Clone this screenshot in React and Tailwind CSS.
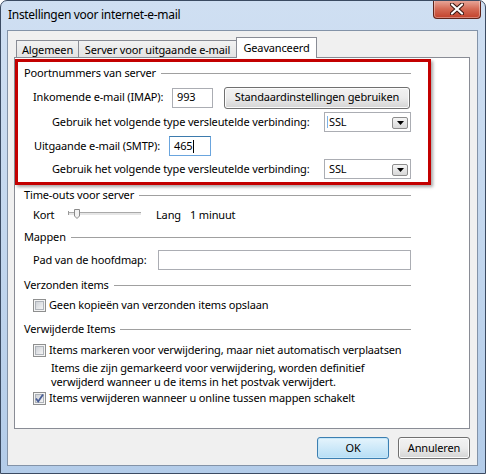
import React from 'react'

const Heading = ({ title, className = '' }) => (
  <div className={`flex items-center h-[16px] ${className}`}>
    <span className="whitespace-nowrap">{title}</span>
    <div className="flex-1 h-px bg-[#a0a0a0] ml-[5px]"></div>
  </div>
)

const Checkbox = ({ checked }) => (
  <svg width="13" height="13" viewBox="0 0 13 13" className="shrink-0">
    <defs>
      <linearGradient id={checked ? 'cbc' : 'cbu'} x1="0" y1="0" x2="1" y2="1">
        <stop offset="0" stopColor="#cbcfd5" />
        <stop offset="1" stopColor="#f7f7f7" />
      </linearGradient>
    </defs>
    <rect x="0.5" y="0.5" width="12" height="12" fill="#f4f4f4" stroke="#8e8f8f" />
    <rect x="2.5" y="2.5" width="8" height="8" fill={`url(#${checked ? 'cbc' : 'cbu'})`} stroke="#aeb3b9" />
    {checked && (
      <path d="M3 6.5 L5.2 9.5 L10 2.5" fill="none" stroke="#4a5f97" strokeWidth="1.8" />
    )}
  </svg>
)

const Select = ({ caret }) => (
  <div className="relative w-[87px] h-[20px] border border-[#abadb3] bg-white flex items-center pl-[4px] shrink-0">
    {caret && <div className="absolute left-[2px] top-[3px] w-px h-[12px] bg-[#7fb3e6]"></div>}
    <span>SSL</span>
    <div className="absolute right-[2px] top-[4px] w-[16px] h-[12px] border border-[#8d8d8d] rounded-[2px] bg-gradient-to-b from-[#f5f5f5] to-[#d8d8d8] flex items-center justify-center">
      <svg width="7" height="4" viewBox="0 0 7 4">
        <path d="M0 0 H7 L3.5 4 Z" fill="#000" />
      </svg>
    </div>
  </div>
)

const Slider = () => (
  <svg width="73" height="16" viewBox="0 0 73 16" className="shrink-0">
    <rect x="0" y="5" width="73" height="1" fill="#a9a9a9" />
    <rect x="0" y="6" width="73" height="2" fill="#e6e6e6" />
    <rect x="0" y="4" width="1" height="4" fill="#9a9a9a" />
    <path d="M6.5 2.5 H11.5 V9 L9 11.5 L6.5 9 Z" fill="#f2f2f2" stroke="#8a8a8a" />
  </svg>
)

const Button = ({ children, def, className = '' }) => (
  <div
    className={`h-[22px] rounded-[3px] border flex items-center justify-center whitespace-nowrap shrink-0 ${
      def
        ? 'border-[#3c7fb1] bg-gradient-to-b from-[#e5f4fc] to-[#b6def5] shadow-[inset_0_0_0_1px_#c6e7f9]'
        : 'border-[#707070] bg-gradient-to-b from-[#f2f2f2] via-[#ebebeb] to-[#d4d4d4] shadow-[inset_0_0_0_1px_#fcfcfc]'
    } ${className}`}
  >
    {children}
  </div>
)

const App = () => {
  return (
    <div className="w-[486px] h-[474px] flex flex-col rounded-t-[7px] border border-[#3b4b62] bg-gradient-to-b from-[#cfdff2] via-[#c3d7ee] to-[#b3cce9] font-['Noto_Sans',sans-serif] text-[11px] tracking-[-0.15px] text-black overflow-hidden whitespace-nowrap">
      {/* Title bar */}
      <div className="h-[29px] flex justify-between shrink-0">
        <div className="pl-[7px] pt-[6px] leading-[16px] text-[12px] tracking-[-0.3px]">Instellingen voor internet-e-mail</div>
        <div className="-mt-px mr-[4px] w-[48px] h-[19px] rounded-b-[4px] border border-[#5f241a] border-t-0 bg-gradient-to-b from-[#e8ab9f] via-[#d46a55] to-[#c2402a] flex items-center justify-center shadow-[inset_0_0_0_1px_rgba(255,255,255,0.35)]">
          <svg width="14" height="12" viewBox="0 0 14 12">
            <path d="M2 1.5 L12 10.5 M12 1.5 L2 10.5" stroke="#3a1712" strokeWidth="4.2" strokeLinecap="round" />
            <path d="M2 1.5 L12 10.5 M12 1.5 L2 10.5" stroke="#ffffff" strokeWidth="2.2" strokeLinecap="round" />
          </svg>
        </div>
      </div>

      {/* Client area */}
      <div className="flex-1 ml-[6px] mr-[7px] mb-[7px] border border-[#8393a8] bg-[#f0f0f0] flex flex-col">
        {/* Tabs */}
        <div className="pt-[6px] pl-[8px] flex items-end h-[26px] shrink-0">
          <div className="w-[63px] h-[17px] border border-b-0 border-[#898c95] bg-gradient-to-b from-[#f2f2f2] to-[#e3e3e3] flex items-center justify-center leading-none pt-[1px]">
            Algemeen
          </div>
          <div className="w-[158px] h-[17px] border border-l-0 border-b-0 border-[#898c95] bg-gradient-to-b from-[#f2f2f2] to-[#e3e3e3] flex items-center justify-center leading-none pt-[1px]">
            Server voor uitgaande e-mail
          </div>
          <div className="-ml-px w-[81px] h-[21px] -mb-px relative z-10 border border-b-0 border-[#898c95] bg-white flex items-center justify-center leading-none pb-[1px]">
            Geavanceerd
          </div>
        </div>

        {/* Tab panel */}
        <div className="flex-1 mx-[6px] mr-[7px] border border-[#898c95] bg-white relative">
          <div className="pl-[9px] pr-[58px] flex flex-col">
            <Heading title="Poortnummers van server" className="mt-[7px]" />

            <div className="mt-[6px] h-[21px] pl-[9px] flex items-center">
              <span className="w-[139px] shrink-0">Inkomende e-mail (IMAP):</span>
              <div className="w-[41px] h-[20px] border border-[#abadb3] flex items-center pl-[4px] shrink-0">993</div>
              <Button className="ml-[11px] w-[186px]">Standaardinstellingen gebruiken</Button>
            </div>

            <div className="mt-[4px] h-[20px] pl-[28px] flex items-center">
              <span className="w-[272px] shrink-0">Gebruik het volgende type versleutelde verbinding:</span>
              <Select caret />
            </div>

            <div className="mt-[4px] h-[20px] pl-[10px] flex items-center">
              <span className="w-[135px] shrink-0">Uitgaande e-mail (SMTP):</span>
              <div className="w-[42px] h-[20px] border border-[#6aa5de] border-t-[#3d7bad] flex items-center pl-[4px] shrink-0">
                465<span className="w-px h-[13px] bg-black ml-px"></span>
              </div>
            </div>

            <div className="mt-[3px] h-[20px] pl-[28px] flex items-center">
              <span className="w-[272px] shrink-0">Gebruik het volgende type versleutelde verbinding:</span>
              <Select />
            </div>

            <Heading title="Time-outs voor server" className="mt-[8px]" />

            <div className="mt-[4px] h-[16px] pl-[9px] flex items-center">
              <span className="w-[35px] shrink-0">Kort</span>
              <Slider />
              <span className="ml-[15px] w-[34px] shrink-0">Lang</span>
              <span>1 minuut</span>
            </div>

            <Heading title="Mappen" className="mt-[6px]" />

            <div className="mt-[5px] h-[20px] pl-[9px] flex items-center">
              <span className="w-[125px] shrink-0">Pad van de hoofdmap:</span>
              <div className="flex-1 h-[20px] border border-[#abadb3]"></div>
            </div>

            <Heading title="Verzonden items" className="mt-[7px]" />

            <div className="mt-[4px] h-[16px] pl-[9px] flex items-center gap-[3px]">
              <Checkbox />
              <span>Geen kopieën van verzonden items opslaan</span>
            </div>

            <Heading title="Verwijderde Items" className="mt-[8px]" />

            <div className="mt-[5px] h-[16px] pl-[9px] flex items-center gap-[3px]">
              <Checkbox />
              <span>Items markeren voor verwijdering, maar niet automatisch verplaatsen</span>
            </div>

            <div className="mt-[3px] pl-[27px] leading-[14px]">
              <div>Items die zijn gemarkeerd voor verwijdering, worden definitief</div>
              <div>verwijderd wanneer u de items in het postvak verwijdert.</div>
            </div>

            <div className="mt-[1px] h-[16px] pl-[9px] flex items-center gap-[3px]">
              <Checkbox checked />
              <span>Items verwijderen wanneer u online tussen mappen schakelt</span>
            </div>
          </div>

          {/* annotation frame */}
          <div className="absolute left-0 top-[1px] w-[416px] h-[126px] border-[3px] border-[#c30000] shadow-[2px_2px_3px_rgba(0,0,0,0.35)]"></div>
        </div>

        {/* Buttons */}
        <div className="pt-[8px] pb-[6px] pr-[7px] flex justify-end gap-[9px] shrink-0">
          <Button def className="w-[72px]">OK</Button>
          <Button className="w-[72px]">Annuleren</Button>
        </div>
      </div>
    </div>
  )
}

export default App
